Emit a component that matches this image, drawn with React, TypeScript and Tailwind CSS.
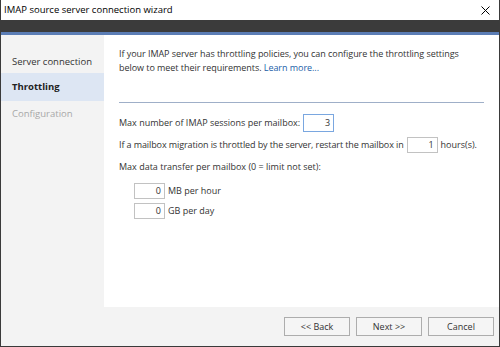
const font = { fontFamily: '"Open Sans", "Noto Sans", sans-serif' };

function NumBox({ value, focused }: { value: string; focused?: boolean }) {
  return (
    <div
      className={`w-[31px] ${focused ? "h-[18px] border-[#7aa7e0]" : "h-[16px] border-[#c2c2c2]"} border bg-white flex items-center justify-end pr-[3px] text-[9px] text-[#333] shrink-0`}
    >
      {value}
    </div>
  );
}

function WizardButton({ children }: { children: React.ReactNode }) {
  return (
    <button className="w-[66px] h-[19px] border border-[#adadad] bg-[#f5f5f5] text-[9px] text-[#333] flex items-center justify-center">
      {children}
    </button>
  );
}

export default function App() {
  return (
    <div className="w-[500px] h-[347px] flex flex-col bg-white text-[#333] overflow-hidden" style={font}>
      {/* title bar */}
      <div className="h-[20px] flex items-center justify-between pl-[3px] pr-[9px] border-x border-[#3a3a3a] shrink-0">
        <span className="text-[9.5px] text-black">IMAP source server connection wizard</span>
        <svg width="9" height="9" viewBox="0 0 9 9" className="text-black">
          <path d="M0.5 0.5 L8.5 8.5 M8.5 0.5 L0.5 8.5" stroke="currentColor" strokeWidth="1" />
        </svg>
      </div>
      <div className="h-[12px] bg-[#3b3b3b] shrink-0" />
      <div className="h-[3px] bg-[#5b7db5] border-x border-[#3a3a3a] shrink-0" />

      <div className="flex-1 flex flex-col bg-[#f3f3f3] border-x border-b border-[#3a3a3a]">
        <div className="flex flex-1">
          {/* sidebar */}
          <div className="w-[103px] pt-[20px] flex flex-col text-[9.5px]">
            <div className="h-[14px] pl-[11px] flex items-center">Server connection</div>
            <div className="h-[28px] mt-[4px] pl-[11px] flex items-center bg-[#dde6f3] font-bold text-[#222]">
              Throttling
            </div>
            <div className="h-[26px] pl-[11px] flex items-center text-[#a8a8a8]">Configuration</div>
          </div>

          {/* content */}
          <div className="flex-1 bg-white pl-[15px] pr-[15px] pt-[12px] text-[9px] text-[#333]">
            <p className="leading-[14px] tracking-[-0.05px]">
              If your IMAP server has throttling policies, you can configure the throttling settings below to
              meet their requirements. <span className="text-[#1a5ea8]">Learn more...</span>
            </p>
            <div className="mt-[27px] h-px bg-[#9fafc8]" />

            <div className="mt-[10px] h-[20px] flex items-center gap-[3px]">
              <span>Max number of IMAP sessions per mailbox:</span>
              <NumBox value="3" focused />
            </div>
            <div className="mt-[2px] h-[20px] flex items-center gap-[3px] whitespace-nowrap">
              <span className="tracking-[-0.1px]">
                If a mailbox migration is throttled by the server, restart the mailbox in
              </span>
              <NumBox value="1" />
              <span>hours(s).</span>
            </div>
            <div className="mt-[2px] h-[20px] flex items-center">
              Max data transfer per mailbox (0 = limit not set):
            </div>
            <div className="mt-[6px] pl-[15px] flex flex-col gap-[4px]">
              <div className="flex items-center gap-[3px]">
                <NumBox value="0" />
                <span>MB per hour</span>
              </div>
              <div className="flex items-center gap-[3px]">
                <NumBox value="0" />
                <span>GB per day</span>
              </div>
            </div>
          </div>
        </div>

        {/* footer */}
        <div className="h-[39px] shrink-0 flex items-center justify-end gap-[6px] pr-[5px]">
          <WizardButton>&lt;&lt; Back</WizardButton>
          <WizardButton>Next &gt;&gt;</WizardButton>
          <WizardButton>Cancel</WizardButton>
        </div>
      </div>
    </div>
  );
}
